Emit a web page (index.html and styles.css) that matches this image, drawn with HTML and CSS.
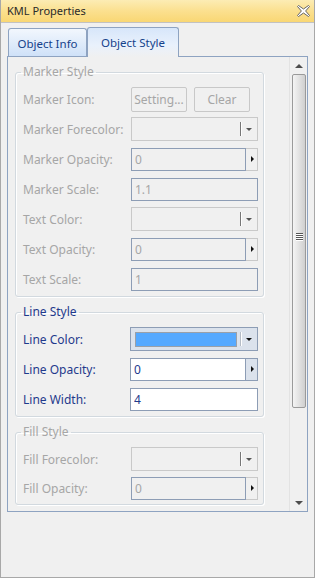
FILE: index.html
```html
<!DOCTYPE html>
<html lang="en">
<head>
    <meta charset="UTF-8">
    <title>KML Properties</title>
    <link rel="stylesheet" href="styles.css">
</head>
<body>
<div class="window">
    <div class="titlebar">
        <span class="title">KML Properties</span>
        <svg class="close" width="13" height="12" viewBox="0 0 13 12">
            <path d="M0.5 1.5 L1.5 0.5 L6.5 4 L11.5 0.5 L12.5 1.5 L8.6 6 L12.5 10.5 L11.5 11.5 L6.5 8 L1.5 11.5 L0.5 10.5 L4.4 6 Z"
                  fill="#ffffff" stroke="#666666" stroke-width="1" stroke-linejoin="round"/>
        </svg>
    </div>
    <div class="tabs">
        <div class="tab">Object Info</div>
        <div class="tab active">Object Style</div>
    </div>
    <div class="panel">
        <div class="content">
            <fieldset class="group disabled">
                <legend>Marker Style</legend>
                <div class="row">
                    <label>Marker Icon:</label>
                    <div class="buttons">
                        <button disabled>Setting...</button>
                        <button disabled>Clear</button>
                    </div>
                </div>
                <div class="row">
                    <label>Marker Forecolor:</label>
                    <div class="combo"><span class="swatch empty"></span><span class="sep"></span><span class="arrow"></span></div>
                </div>
                <div class="row">
                    <label>Marker Opacity:</label>
                    <div class="spin"><input type="text" value="0" disabled><span class="spin-btn"></span></div>
                </div>
                <div class="row">
                    <label>Marker Scale:</label>
                    <input class="field" type="text" value="1.1" disabled>
                </div>
                <div class="row">
                    <label>Text Color:</label>
                    <div class="combo"><span class="swatch empty"></span><span class="sep"></span><span class="arrow"></span></div>
                </div>
                <div class="row">
                    <label>Text Opacity:</label>
                    <div class="spin"><input type="text" value="0" disabled><span class="spin-btn"></span></div>
                </div>
                <div class="row">
                    <label>Text Scale:</label>
                    <input class="field" type="text" value="1" disabled>
                </div>
            </fieldset>

            <fieldset class="group enabled">
                <legend>Line Style</legend>
                <div class="row">
                    <label>Line Color:</label>
                    <div class="combo"><span class="swatch" style="background: #55a9ff"></span><span class="sep"></span><span class="arrow"></span></div>
                </div>
                <div class="row">
                    <label>Line Opacity:</label>
                    <div class="spin"><input type="text" value="0"><span class="spin-btn"></span></div>
                </div>
                <div class="row">
                    <label>Line Width:</label>
                    <input class="field" type="text" value="4">
                </div>
            </fieldset>

            <fieldset class="group disabled">
                <legend>Fill Style</legend>
                <div class="row">
                    <label>Fill Forecolor:</label>
                    <div class="combo"><span class="swatch empty"></span><span class="sep"></span><span class="arrow"></span></div>
                </div>
                <div class="row tight">
                    <label>Fill Opacity:</label>
                    <div class="spin"><input type="text" value="0" disabled><span class="spin-btn"></span></div>
                </div>
            </fieldset>
        </div>
        <div class="scrollbar">
            <div class="scroll-arrow up"></div>
            <div class="thumb"><span class="grip"></span></div>
            <div class="track"></div>
            <div class="scroll-arrow down"></div>
        </div>
    </div>
</div>
</body>
</html>
```

FILE: styles.css
```css
*, *:before, *:after {
    box-sizing: border-box;
}

body {
    margin: 0;
    padding: 0;
    background-color: #f0f0f0;
    font-family: 'Noto Sans', 'Open Sans', sans-serif;
    font-size: 11px;
}

.window {
    width: 315px;
    height: 578px;
    border: 1px solid #a8a8a8;
    border-top: none;
    background-color: #f0f0f0;
}

/* title bar */
.titlebar {
    height: 23px;
    display: flex;
    align-items: center;
    justify-content: space-between;
    padding: 0 4px 1px 6px;
    background: linear-gradient(#fcecb4, #fbe08f 50%, #f9d774);
    border-bottom: 1px solid #c2c2c2;
}

.title {
    color: #2a2a2a;
    font-size: 11px;
}

.close {
    display: block;
}

/* tabs */
.tabs {
    display: flex;
    align-items: flex-end;
    padding: 4px 0 0 7px;
}

.tab {
    height: 28px;
    width: 79px;
    display: flex;
    align-items: center;
    justify-content: center;
    color: #15428b;
    font-size: 11.5px;
    border: 1px solid #8ea3c1;
    border-bottom: none;
    border-radius: 3px 3px 0 0;
    background: linear-gradient(#f2f7fd, #cfe1f8);
    padding-top: 1px;
}

.tab.active {
    height: 30px;
    width: 92px;
    margin-bottom: -1px;
    position: relative;
    z-index: 1;
    padding-bottom: 2px;
    background: linear-gradient(#d7e6fa, #e9f1fc 60%, #f0f0f0);
}

/* panel */
.panel {
    margin-left: 6px;
    width: 301px;
    height: 456px;
    border: 1px solid #8ea3c1;
    display: flex;
}

.content {
    flex: 1;
    padding: 7px 0 0 7px;
}

.group {
    width: 249px;
    margin: 0 0 7px 0;
    padding: 4px 5px 2px 7px;
    border: 1px solid #d2d9df;
    border-radius: 3px;
    box-shadow: inset 1px 1px 0 #ffffff, 1px 1px 0 #ffffff;
}

.group legend {
    padding: 0 2px;
    margin-left: -2px;
    font-size: 12px;
    line-height: 16px;
}

.disabled legend,
.disabled label {
    color: #a6a6a6;
}

.enabled legend,
.enabled label {
    color: #1f3a8c;
}

.row {
    display: flex;
    align-items: center;
    height: 30px;
}

.row.tight {
    height: 28px;
}

.row label {
    width: 108px;
    font-size: 12px;
}

.buttons {
    display: flex;
    gap: 7px;
}

.buttons button {
    width: 56px;
    height: 25px;
    border: 1px solid #c8c8c8;
    border-radius: 2px;
    background-color: #f0f0f0;
    color: #a6a6a6;
    font-family: inherit;
    font-size: 12px;
    padding: 0;
}

/* combo box */
.combo {
    width: 127px;
    height: 24px;
    display: flex;
    align-items: center;
    padding: 4px 0 4px 4px;
    border: 1px solid #c9c9c9;
    background-color: #f0f0f0;
}

.swatch {
    flex: 1;
    height: 15px;
    border: 1px solid #9aa0a8;
}

.swatch.empty {
    border: none;
}

.sep {
    width: 1px;
    height: 14px;
    margin-left: 3px;
    background-color: #777777;
    box-shadow: 1px 0 0 #ffffff;
}

.arrow {
    width: 0;
    height: 0;
    margin: 0 5px 0 5px;
    border-left: 3px solid transparent;
    border-right: 3px solid transparent;
    border-top: 3px solid #555555;
}

.enabled .combo {
    width: 128px;
    margin-left: -1px;
    border-color: #8d9db5;
    background-color: #dbe2ec;
}

.enabled .sep {
    background-color: #b5bcc6;
}

.enabled .arrow {
    border-top-color: #111111;
}

/* spin input */
.spin {
    width: 127px;
    height: 23px;
    display: flex;
}

.spin input,
.field {
    height: 23px;
    border: 1px solid #8d9db5;
    background-color: #f0f0f0;
    color: #a6a6a6;
    font-family: inherit;
    font-size: 12px;
    padding: 0 0 0 3px;
    outline: none;
}

.spin input {
    width: 115px;
}

.field {
    width: 127px;
}

.spin-btn {
    flex: 1;
    border: 1px solid #c9c9c9;
    border-left: none;
    display: flex;
    align-items: center;
    justify-content: center;
}

.spin-btn:after {
    content: '';
    border-top: 3px solid transparent;
    border-bottom: 3px solid transparent;
    border-left: 3px solid #111111;
    margin-left: 2px;
}

.enabled .spin,
.enabled .field {
    margin-left: -1px;
    width: 128px;
}

.enabled .spin input,
.enabled .field {
    background-color: #ffffff;
    color: #1f3a8c;
}

.enabled .spin-btn {
    border-color: #8d9db5;
    border-left: 1px solid #8d9db5;
    background-color: #dbe2ec;
}

.enabled .spin input {
    width: 115px;
    border-right: none;
}

/* scrollbar */
.scrollbar {
    width: 18px;
    display: flex;
    flex-direction: column;
    border-left: 1px solid #e3e3e3;
    background-color: #f0f0f0;
}

.scroll-arrow {
    height: 17px;
    display: flex;
    align-items: center;
    justify-content: center;
}

.scroll-arrow.up:after {
    content: '';
    border-left: 4px solid transparent;
    border-right: 4px solid transparent;
    border-bottom: 4px solid #4d4d4d;
}

.scroll-arrow.down:after {
    content: '';
    border-left: 4px solid transparent;
    border-right: 4px solid transparent;
    border-top: 4px solid #4d4d4d;
}

.thumb {
    height: 334px;
    margin: 0 1px 0 2px;
    border: 1px solid #9a9a9a;
    border-radius: 2px;
    background: linear-gradient(to right, #f4f4f4, #e2e2e2 50%, #cfcfcf);
    display: flex;
    align-items: center;
    justify-content: center;
}

.grip {
    width: 7px;
    height: 8px;
    background: repeating-linear-gradient(#555555 0 1px, #ffffff 1px 2px);
    margin-top: -8px;
}

.track {
    flex: 1;
}
```
